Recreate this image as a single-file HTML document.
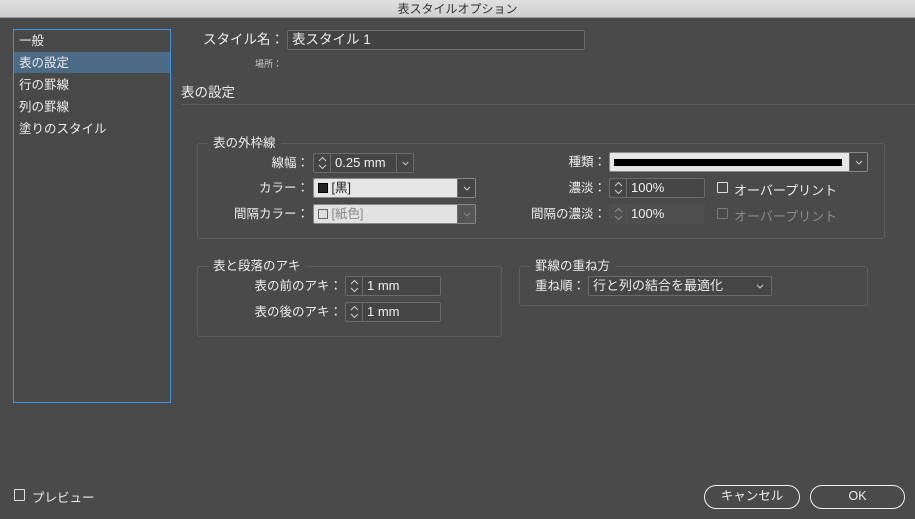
<!DOCTYPE html>
<html><head><meta charset="utf-8"><style>
*{box-sizing:border-box;margin:0;padding:0}
body{width:915px;height:519px;background:#4a4a4a;font-family:"Liberation Sans","Noto Sans CJK JP",sans-serif;color:#ececec;font-size:12.5px;position:relative;overflow:hidden}
.a{position:absolute;white-space:nowrap}
.title{left:0;top:0;width:915px;height:18px;background:linear-gradient(#e0e0e0,#cfcfcf);color:#333;text-align:center;line-height:18px;font-size:12px;border-bottom:1px solid #999}
.list{left:13px;top:29px;width:158px;height:374px;border:1px solid #3d95e0;background:#484848}
.li{position:absolute;left:5px;font-size:12.5px;line-height:22px;height:22px}
.lab{text-align:right;font-size:12.5px;line-height:20px;height:20px}
.inp{background:#434343;border:1px solid #6b6b6b;border-radius:2px;height:20px}
.spin{border:1px solid #6b6b6b;border-radius:2px;height:20px;background:#454545}
.spin .ar{position:absolute;left:0;top:0;width:17px;height:18px;border-right:1px solid #6b6b6b}
.spin .v{position:absolute;left:21px;top:0;line-height:18px;font-size:13px;color:#f0f0f0}
.grp{border:1px solid #5e5e5e;border-radius:3px}
.leg{background:#4a4a4a;padding:0 5px;font-size:12.5px;line-height:14px}
.light{background:#e6e6e6;border:1px solid #888;border-radius:2px;height:20px}
.chev{position:absolute;top:0;right:0;width:18px;height:18px;background:#454545;border-left:1px solid #6b6b6b}
.cb{width:11px;height:11px;border:1px solid #ddd;border-radius:1px}
.btn{border:1.5px solid #f0f0f0;border-radius:12px;height:24px;text-align:center;line-height:21px;font-size:12.5px}
.dim{color:#8a8a8a}
svg{position:absolute;left:0;top:0}
</style></head><body>
<svg width="0" height="0" style="position:absolute"><defs>
<symbol id="ud" viewBox="0 0 17 18"><path d="M5 7 L8.5 3.5 L12 7 M5 11 L8.5 14.5 L12 11" fill="none" stroke="currentColor" stroke-width="1"/></symbol>
<symbol id="dn" viewBox="0 0 18 18"><path d="M6 8 L9 11 L12 8" fill="none" stroke="currentColor" stroke-width="1"/></symbol>
</defs></svg>
<div class="a title">表スタイルオプション</div>
<div class="a list">
<div class="li" style="top:0">一般</div>
<div style="position:absolute;left:0;top:22px;width:156px;height:21px;background:#4b6a85"></div>
<div class="li" style="top:22px">表の設定</div>
<div class="li" style="top:44px">行の罫線</div>
<div class="li" style="top:66px">列の罫線</div>
<div class="li" style="top:88px">塗りのスタイル</div>
</div>
<div class="a lab" style="left:200px;width:84px;top:30px;font-size:13.5px">スタイル名：</div>
<div class="a inp" style="left:287px;top:30px;width:298px;font-size:13.5px;line-height:18px;padding-left:4px">表スタイル 1</div>
<div class="a" style="left:255px;top:57px;font-size:9px;color:#ccc">場所：</div>
<div class="a" style="left:181px;top:81px;font-size:13.5px">表の設定</div>
<div class="a" style="left:181px;top:104px;width:734px;height:1px;background:#5e5e5e"></div>

<div class="a grp" style="left:197px;top:143px;width:688px;height:96px"></div>
<div class="a leg" style="left:208px;top:136px">表の外枠線</div>
<div class="a lab" style="left:230px;width:79px;top:153px">線幅：</div>
<div class="a spin" style="left:313px;top:153px;width:101px;color:#ccc"><div class="ar"><svg width="17" height="18"><use href="#ud"/></svg></div><div class="v">0.25 mm</div><div class="chev" style="width:17px"><svg width="17" height="18"><use href="#dn"/></svg></div></div>
<div class="a lab" style="left:200px;width:109px;top:178px">カラー：</div>
<div class="a light" style="left:313px;top:178px;width:163px;color:#222;line-height:18px;padding-left:4px"><span style="display:inline-block;width:10px;height:10px;background:#222;border:1px solid #000;vertical-align:-1px"></span> [黒]<div class="chev" style="color:#ccc"><svg width="18" height="18"><use href="#dn"/></svg></div></div>
<div class="a lab" style="left:200px;width:109px;top:204px">間隔カラー：</div>
<div class="a light" style="left:313px;top:204px;width:163px;color:#888;line-height:18px;padding-left:4px;background:#e2e2e2"><span style="display:inline-block;width:10px;height:10px;background:#ddd;border:1px solid #666;vertical-align:-1px"></span> [紙色]<div class="chev" style="background:#555;color:#888"><svg width="18" height="18"><use href="#dn"/></svg></div></div>

<div class="a lab" style="left:500px;width:106px;top:152px">種類：</div>
<div class="a light" style="left:609px;top:152px;width:259px"><div style="position:absolute;left:4px;top:6px;width:228px;height:7px;background:#000"></div><div class="chev" style="color:#ccc"><svg width="18" height="18"><use href="#dn"/></svg></div></div>
<div class="a lab" style="left:500px;width:106px;top:178px">濃淡：</div>
<div class="a spin" style="left:609px;top:178px;width:96px;color:#ccc"><div class="ar"><svg width="17" height="18"><use href="#ud"/></svg></div><div class="v">100%</div></div>
<div class="a cb" style="left:717px;top:182px"></div>
<div class="a" style="left:734px;top:180px;font-size:13px">オーバープリント</div>
<div class="a lab" style="left:480px;width:126px;top:204px">間隔の濃淡：</div>
<div class="a spin" style="left:609px;top:204px;width:96px;background:#4e4e4e;border-color:#505050;color:#888"><div class="ar" style="border-color:#555"><svg width="17" height="18"><use href="#ud"/></svg></div><div class="v dim">100%</div></div>
<div class="a cb" style="left:717px;top:208px;border-color:#777"></div>
<div class="a dim" style="left:734px;top:206px;font-size:13px">オーバープリント</div>

<div class="a grp" style="left:197px;top:266px;width:305px;height:71px"></div>
<div class="a leg" style="left:208px;top:259px">表と段落のアキ</div>
<div class="a lab" style="left:220px;width:122px;top:276px">表の前のアキ：</div>
<div class="a spin" style="left:345px;top:276px;width:96px;color:#ccc"><div class="ar"><svg width="17" height="18"><use href="#ud"/></svg></div><div class="v">1 mm</div></div>
<div class="a lab" style="left:220px;width:122px;top:302px">表の後のアキ：</div>
<div class="a spin" style="left:345px;top:302px;width:96px;color:#ccc"><div class="ar"><svg width="17" height="18"><use href="#ud"/></svg></div><div class="v">1 mm</div></div>

<div class="a grp" style="left:519px;top:266px;width:349px;height:40px"></div>
<div class="a leg" style="left:530px;top:259px">罫線の重ね方</div>
<div class="a lab" style="left:530px;width:55px;top:276px">重ね順：</div>
<div class="a spin" style="left:588px;top:276px;width:184px;line-height:18px;padding-left:4px;font-size:13px">行と列の結合を最適化<div style="position:absolute;right:2px;top:0;width:18px;height:18px;color:#ccc"><svg width="18" height="18"><use href="#dn"/></svg></div></div>

<div class="a cb" style="left:14px;top:489px;height:12px"></div>
<div class="a" style="left:32px;top:487px;font-size:12.5px">プレビュー</div>
<div class="a btn" style="left:704px;top:485px;width:96px">キャンセル</div>
<div class="a btn" style="left:810px;top:485px;width:95px">OK</div>
</body></html>
